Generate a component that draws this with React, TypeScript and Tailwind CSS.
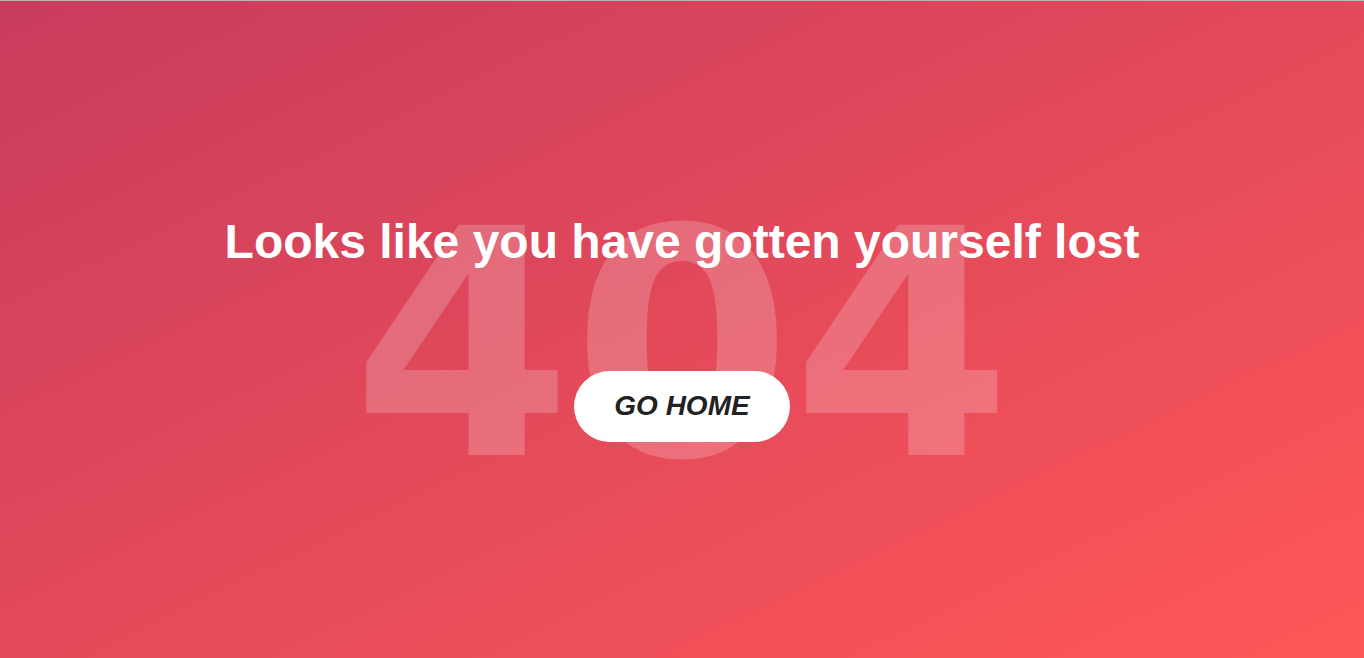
export default function App() {
  return (
    <main className="relative flex h-screen w-full items-center justify-center overflow-hidden border-t border-[#bdb4b6] bg-linear-to-br from-[#c83c5c] to-[#ff5757] font-['Liberation_Sans',Arial,sans-serif]">
      <div className="relative flex flex-col items-center gap-[105px]">
        {/* big faded code behind the message */}
        <span className="pointer-events-none absolute left-1/2 top-[-30px] -translate-x-1/2 select-none font-['DejaVu_Sans',sans-serif] text-[316px] font-bold leading-none text-white/20">
          404
        </span>
        <h1 className="relative text-5xl font-bold leading-none text-white">
          Looks like you have gotten yourself lost
        </h1>
        <a
          href="#"
          className="relative flex h-[71px] items-center rounded-full bg-white px-[40px] text-[28px] font-bold italic text-[#222]"
        >
          GO HOME
        </a>
      </div>
    </main>
  );
}
